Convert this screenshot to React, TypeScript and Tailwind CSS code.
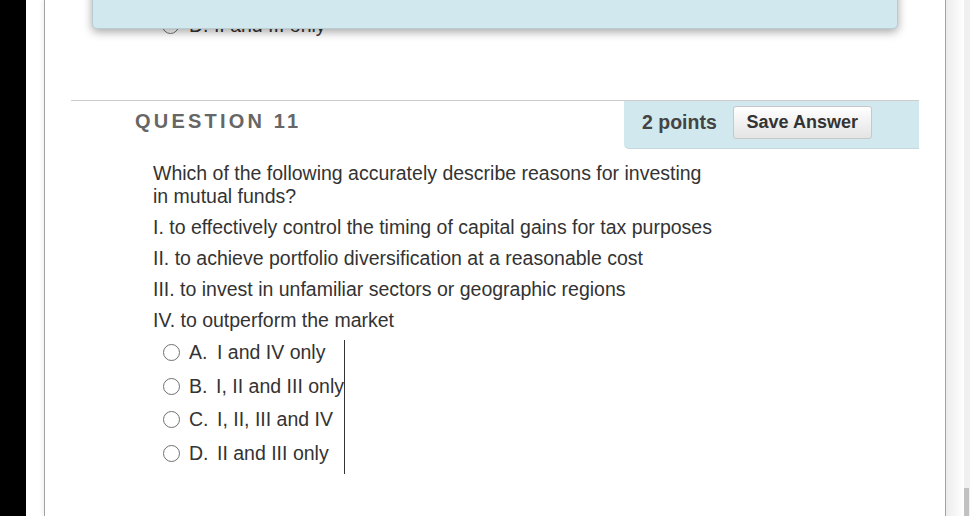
import React from 'react';

const STATEMENTS = [
  'I. to effectively control the timing of capital gains for tax purposes',
  'II. to achieve portfolio diversification at a reasonable cost',
  'III. to invest in unfamiliar sectors or geographic regions',
  'IV. to outperform the market',
];

const OPTIONS = [
  { letter: 'A.', text: 'I and IV only' },
  { letter: 'B.', text: 'I, II and III only' },
  { letter: 'C.', text: 'I, II, III and IV' },
  { letter: 'D.', text: 'II and III only' },
];

const Radio = () => (
  <span className="inline-block w-[17px] h-[17px] rounded-full border-[1.5px] border-[#707070] bg-white shrink-0" />
);

export default function App() {
  return (
    <div
      className="flex w-[970px] h-[516px] overflow-hidden bg-white text-[#333]"
      style={{ fontFamily: '"Liberation Sans", Arial, sans-serif' }}
    >
      <div className="w-[26px] bg-black shrink-0" />
      <div className="w-[18px] shrink-0 bg-white" />

      {/* page container */}
      <div className="relative w-[902px] shrink-0 border-x border-[#a3a3a3] bg-white shadow-[-2px_0_4px_rgba(0,0,0,0.06)]">
        {/* tail of previous question */}
        <div className="h-[100px] pt-[13px]">
          <div className="ml-[117px] flex items-center gap-[10px] text-[19.5px] leading-6">
            <Radio />
            <span>D. II and III only</span>
          </div>
        </div>

        {/* floating panel over the top */}
        <div className="absolute left-[47px] top-[-12px] w-[806px] h-[41px] rounded-[5px] bg-[#d1e8ee] border border-[#b9ccd2] shadow-[0_3px_10px_rgba(0,0,0,0.35)]" />

        {/* question header */}
        <div className="flex mx-[26px]">
          <div className="flex-1 border-t border-[#cccccc] pl-[64px] pt-[5px]">
            <h3 className="text-[20px] font-bold tracking-[0.16em] text-[#666]">QUESTION 11</h3>
          </div>
          <div className="w-[295px] h-[49px] flex items-center pl-[18px] pb-[4px] gap-[16px] bg-[#d1e8ee] border-t border-[#cccccc] border-b border-b-[#c4d8de] rounded-bl-[5px]">
            <span className="text-[19.5px] font-bold text-[#444]">2 points</span>
            <button className="h-[33px] w-[139px] rounded-[3px] border border-[#c8c8c8] bg-gradient-to-b from-white to-[#e4e4e4] text-[18px] font-bold text-[#333]">
              Save Answer
            </button>
          </div>
        </div>

        {/* question body */}
        <div className="ml-[108px] mt-[13px] text-[19.5px] leading-[23px]">
          <p className="mb-2">
            Which of the following accurately describe reasons for investing
            <br />
            in mutual funds?
          </p>
          {STATEMENTS.map((s) => (
            <p key={s} className="mb-2">
              {s}
            </p>
          ))}
          <div className="w-[192px] border-r border-[#333] mt-[3px]">
            {OPTIONS.map((o) => (
              <div key={o.letter} className="h-[33.5px] flex items-start pt-[1px] pl-[10px]">
                <span className="h-[23px] flex items-center">
                  <Radio />
                </span>
                <span className="ml-[9px] w-[28px]">{o.letter}</span>
                <span className="whitespace-nowrap">{o.text}</span>
              </div>
            ))}
          </div>
        </div>
      </div>

      {/* right gutter + scrollbar */}
      <div className="w-[18px] shrink-0 bg-gradient-to-r from-[#ececec] to-white" />
      <div className="relative w-[6px] shrink-0 bg-[#f0f0f0]">
        <div className="absolute bottom-0 left-0 w-[5px] h-[28px] bg-[#c1c1c1]" />
      </div>
    </div>
  );
}
